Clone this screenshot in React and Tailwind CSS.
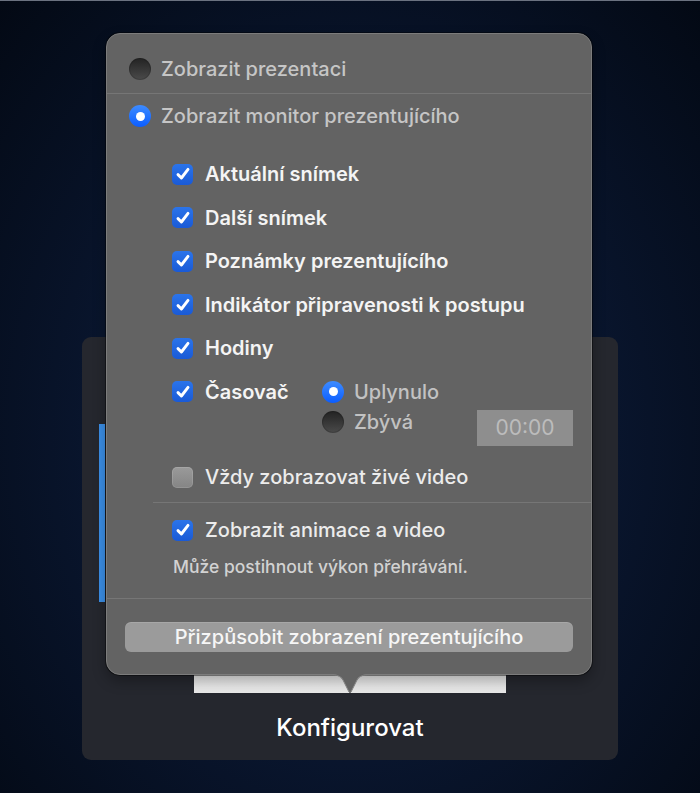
import React from "react";

function Radio({ on }) {
  if (on) {
    return (
      <span className="flex items-center justify-center w-[22px] h-[22px] rounded-full bg-gradient-to-b from-[#3d8bff] to-[#0a5cff] shrink-0">
        <span className="w-[9px] h-[9px] rounded-full bg-white" />
      </span>
    );
  }
  return (
    <span className="w-[22px] h-[22px] rounded-full bg-gradient-to-b from-[#232323] to-[#4b4b4b] shadow-[inset_0_0_0_1px_rgba(0,0,0,0.15)] shrink-0" />
  );
}

function Check({ on }) {
  if (!on) {
    return (
      <span className="w-[21px] h-[21px] rounded-[5px] bg-gradient-to-b from-[#9a9a9a] to-[#858585] shadow-[inset_0_0_0_1px_rgba(255,255,255,0.12)] shrink-0" />
    );
  }
  return (
    <span className="flex items-center justify-center w-[21px] h-[21px] rounded-[5px] bg-gradient-to-b from-[#2b74ea] to-[#1a5ad6] shrink-0">
      <svg width="16" height="16" viewBox="0 0 16 16" fill="none">
        <path
          d="M3 8.6 L6.4 12 L13 3.4"
          stroke="white"
          strokeWidth="2.9"
          strokeLinecap="round"
          strokeLinejoin="round"
        />
      </svg>
    </span>
  );
}

function CheckRow({ label, on = true, bold = true }) {
  return (
    <div className="flex items-center gap-[12px] h-[24px]">
      <Check on={on} />
      <span
        className={
          bold
            ? "text-[20px] leading-[24px] font-semibold text-[#f4f4f4]"
            : "text-[20px] leading-[24px] font-medium text-[#ececec]"
        }
      >
        {label}
      </span>
    </div>
  );
}

export default function App() {
  return (
    <div className="relative w-full h-[793px] overflow-hidden border-t border-[#6b7280] bg-[radial-gradient(ellipse_at_50%_55%,#13254a_0%,#0a1731_45%,#030914_100%)] font-[Inter,sans-serif]">
      {/* panel behind the popover */}
      <div className="mt-[336px] ml-[82px] w-[536px] h-[423px] rounded-[9px] bg-[#25272e] flex flex-col">
        <div className="mt-[87px] ml-[17px] w-[6px] h-[178px] bg-[#3b8ee6]" />
        <div className="mt-[31px] mx-auto w-[312px] h-[60px] bg-gradient-to-b from-[#f6f6f6] to-[#e8e8e8]" />
        <div className="mt-[21px] text-center text-[24px] leading-[28px] font-medium text-white">
          Konfigurovat
        </div>
      </div>

      {/* popover */}
      <div className="absolute left-[106px] top-[32px] w-[486px] rounded-[14px] bg-[#636363] border border-[#7c7c7c] shadow-[0_0_0_1px_rgba(0,0,0,0.4),0_6px_14px_rgba(0,0,0,0.3)] pb-[22px]">
        <div className="flex items-center gap-[10px] pl-[22px] pt-[24px] pb-[13px]">
          <Radio />
          <span className="text-[20px] leading-[22px] font-medium text-[#c6c6c6]">
            Zobrazit prezentaci
          </span>
        </div>
        <div className="h-px bg-[#767676]" />
        <div className="flex items-center gap-[10px] pl-[22px] pt-[11px]">
          <Radio on />
          <span className="text-[20px] leading-[22px] font-medium text-[#c6c6c6]">
            Zobrazit monitor prezentujícího
          </span>
        </div>

        <div className="mt-[35px] pl-[65px] pr-[18px] flex flex-col gap-[19.5px]">
          <CheckRow label="Aktuální snímek" />
          <CheckRow label="Další snímek" />
          <CheckRow label="Poznámky prezentujícího" />
          <CheckRow label="Indikátor připravenosti k postupu" />
          <CheckRow label="Hodiny" />
          <div className="flex items-start">
            <div className="w-[150px]">
              <CheckRow label="Časovač" />
            </div>
            <div className="flex-1 flex flex-col">
              <div className="flex items-center gap-[10px] h-[24px]">
                <Radio on />
                <span className="text-[20px] font-medium text-[#c2c2c2]">Uplynulo</span>
              </div>
              <div className="flex items-start mt-[6px]">
                <div className="flex items-center gap-[10px] h-[24px]">
                  <Radio />
                  <span className="text-[20px] font-medium text-[#c2c2c2]">Zbývá</span>
                </div>
                <div className="ml-auto w-[96px] h-[36px] bg-[#8e8e8e] flex items-center justify-center text-[21px] text-[#bcbcbc]">
                  00:00
                </div>
              </div>
            </div>
          </div>
        </div>

        <div className="mt-[19.5px] pl-[65px]">
          <CheckRow label="Vždy zobrazovat živé video" on={false} bold={false} />
        </div>
        <div className="mt-[13px] ml-[46px] h-px bg-[#767676]" />
        <div className="mt-[15px] pl-[65px]">
          <CheckRow label="Zobrazit animace a video" bold={false} />
        </div>
        <div className="mt-[15px] pl-[66px] text-[17.5px] leading-[20px] font-medium text-[#d2d2d2]">
          Může postihnout výkon přehrávání.
        </div>
        <div className="mt-[21px] h-px bg-[#767676]" />
        <div className="mt-[23px] mx-[18px] h-[30px] rounded-[6px] bg-[#9b9b9b] shadow-[inset_0_1px_0_rgba(255,255,255,0.12)] flex items-center justify-center text-[20px] font-medium text-[#f6f6f6]">
          Přizpůsobit zobrazení prezentujícího
        </div>

        {/* arrow */}
        <svg
          className="absolute left-[223px] -bottom-[20px]"
          width="40"
          height="20"
          viewBox="0 0 40 20"
        >
          <path
            d="M0 0 C7 0 10 1.5 13 5.5 L19 17.5 Q20 19.5 21 17.5 L27 5.5 C30 1.5 33 0 40 0 Z"
            fill="#636363"
          />
          <path
            d="M0 0.5 C7 0.5 10 2 13 6 L19 18 Q20 20 21 18 L27 6 C30 2 33 0.5 40 0.5"
            fill="none"
            stroke="#7c7c7c"
            strokeWidth="1"
          />
        </svg>
      </div>
    </div>
  );
}
